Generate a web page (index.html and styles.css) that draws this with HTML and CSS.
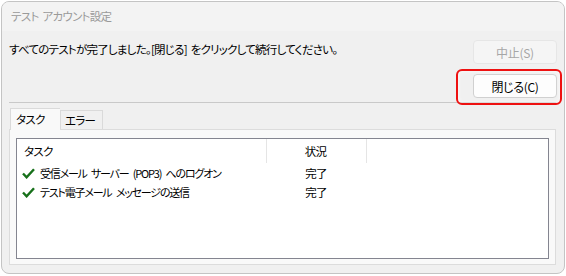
FILE: index.html
```html
<!DOCTYPE html>
<html lang="ja">
<head>
  <meta charset="UTF-8" />
  <title>テスト アカウント設定</title>
  <link rel="stylesheet" href="styles.css">
</head>
<body>

<div class="window">
  <div class="titlebar">テスト アカウント設定</div>

  <div class="top">
    <p class="message">すべてのテストが完了しました。[閉じる] をクリックして続行してください。</p>
    <div class="buttons">
      <button class="btn" disabled>中止(S)</button>
      <div class="close-wrap">
        <button class="btn">閉じる(C)</button>
        <span class="highlight"></span>
      </div>
    </div>
  </div>

  <div class="separator"></div>

  <div class="tabs">
    <div class="tab active">タスク</div>
    <div class="tab">エラー</div>
  </div>

  <div class="panel">
    <div class="listbox">
      <div class="row header">
        <div class="col task">タスク</div>
        <div class="col status">状況</div>
      </div>
      <div class="row">
        <div class="col task"><svg class="check" width="13" height="11" viewBox="0 0 13 11"><path d="M1 5.5 L4.6 9.3 L12 1.2" fill="none" stroke="#17701a" stroke-width="2.4"/></svg><span class="label">受信メール サーバー (POP3) へのログオン</span></div>
        <div class="col status">完了</div>
      </div>
      <div class="row">
        <div class="col task"><svg class="check" width="13" height="11" viewBox="0 0 13 11"><path d="M1 5.5 L4.6 9.3 L12 1.2" fill="none" stroke="#17701a" stroke-width="2.4"/></svg><span class="label">テスト電子メール メッセージの送信</span></div>
        <div class="col status">完了</div>
      </div>
    </div>
  </div>
</div>

</body>
</html>
```

FILE: styles.css
```css
body {
  margin: 0;
  background-color: #ffffff;
  font-family: 'Noto Sans CJK JP', 'Noto Sans', sans-serif;
  font-size: 11.5px;
  letter-spacing: -0.7px;
  word-spacing: 2px;
  font-feature-settings: "palt";
  color: #000;
}

.window {
  margin: 1px 1px 0 1px;
  height: 271px;
  border: 1px solid #c4c4c4;
  border-radius: 8px;
  background: #f0f0f0;
  overflow: hidden;
  display: flex;
  flex-direction: column;
}

.titlebar {
  height: 29px;
  line-height: 28px;
  padding-left: 9px;
  background: #f3f3f3;
  color: #9a9a9a;
}

.top {
  display: flex;
  justify-content: space-between;
  padding: 9px 7px 0 7px;
}

.message {
  margin: 0;
  padding-top: 1px;
  line-height: 16px;
  letter-spacing: -0.75px;
}

.buttons {
  display: flex;
  flex-direction: column;
  gap: 10px;
}

.btn {
  width: 84px;
  height: 24px;
  padding: 0;
  font-family: inherit;
  font-size: 12px;
  letter-spacing: -0.3px;
  font-feature-settings: "palt";
  color: #000;
  background: #fdfdfd;
  border: 1px solid #d0d0d0;
  border-radius: 4px;
}

.btn:disabled {
  color: #a6a6a6;
  background: #f5f5f5;
  border-color: #e6e6e6;
}

.close-wrap {
  position: relative;
}

.highlight {
  position: absolute;
  top: -5px;
  left: -17px;
  right: -5px;
  bottom: -7px;
  border: 2px solid #ee1111;
  border-radius: 6px;
  box-shadow: inset 0 0 4px rgba(255, 255, 255, 0.8);
  z-index: 2;
}

.separator {
  margin: 4px 8px 0 7px;
  height: 1px;
  background: #c9c9c9;
}

.tabs {
  display: flex;
  align-items: flex-end;
  margin: 4px 0 0 8px;
  height: 22px;
}

.tab {
  width: 43px;
  height: 19px;
  line-height: 18px;
  padding-left: 4px;
  box-sizing: border-box;
  border: 1px solid #dadada;
  border-bottom: none;
  background: #f0f0f0;
}

.tab.active {
  width: 50px;
  height: 22px;
  line-height: 20px;
  padding-left: 5px;
  background: #f9f9f9;
  border-right: none;
  margin-bottom: -1px;
  position: relative;
  z-index: 1;
}

.panel {
  margin: 0 8px 8px 7px;
  flex: 1;
  border: 1px solid #dcdcdc;
  background: #f9f9f9;
  padding: 8px 6px 5px 6px;
  display: flex;
}

.listbox {
  flex: 1;
  border: 1px solid #848590;
  background: #ffffff;
}

.row {
  display: flex;
  height: 19px;
  line-height: 19px;
}

.row.header {
  height: 24px;
  line-height: 24px;
  margin-bottom: 1px;
}

.col.task {
  width: 250px;
  padding-left: 5px;
  box-sizing: border-box;
  display: flex;
  align-items: center;
  white-space: nowrap;
}

.label {
  font-size: 11px;
  letter-spacing: -1.2px;
  word-spacing: 3px;
}

.col.status {
  width: 100px;
  text-align: center;
  padding-right: 2px;
  box-sizing: border-box;
}

.header .col.task {
  padding-left: 7px;
  border-right: 1px solid #e5e5e5;
}

.header .col.status {
  border-right: 1px solid #e5e5e5;
}

.check {
  margin-right: 5px;
  flex: none;
}
```
